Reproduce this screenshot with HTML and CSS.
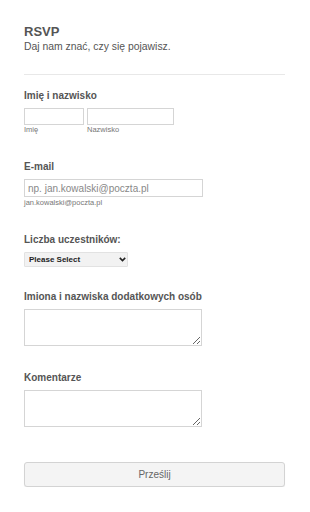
FILE: index.html
```html
<!DOCTYPE html>
<html lang="pl">
<head>
    <meta charset="UTF-8">
    <meta name="viewport" content="width=device-width, initial-scale=1.0">
    <title>RSVP</title>
    <link rel="stylesheet" href="styles.css">
</head>
<body>

    <div id="rsvp">
        <form id="rsvpForm">
            <div class="header">
                <h1>RSVP</h1>
                <p>Daj nam znać, czy się pojawisz.</p>
            </div>

            <div class="field first-field">
                <label>Imię i nazwisko</label>
                <div class="name-row">
                    <div class="name-part">
                        <input type="text" class="first" id="firstName" name="firstName">
                        <span class="sub">Imię</span>
                    </div>
                    <div class="name-part">
                        <input type="text" class="last" id="lastName" name="lastName">
                        <span class="sub">Nazwisko</span>
                    </div>
                </div>
            </div>

            <div class="field">
                <label for="email">E-mail</label>
                <input type="email" class="email" id="email" name="email" placeholder="np. jan.kowalski@poczta.pl">
                <span class="sub helper">jan.kowalski@poczta.pl</span>
            </div>

            <div class="field">
                <label for="count">Liczba uczestników:</label>
                <div class="select-wrap">
                    <select id="count" name="count">
                        <option>Please Select</option>
                        <option>1</option>
                        <option>2</option>
                        <option>3</option>
                        <option>4</option>
                    </select>
                    <svg class="chevron" width="7" height="5" viewBox="0 0 7 5">
                        <path d="M0.8 0.9 L3.5 3.6 L6.2 0.9" fill="none" stroke="#222" stroke-width="1.6"/>
                    </svg>
                </div>
            </div>

            <div class="field after-select">
                <label for="guests">Imiona i nazwiska dodatkowych osób</label>
                <textarea id="guests" name="guests"></textarea>
            </div>

            <div class="field">
                <label for="comments">Komentarze</label>
                <textarea id="comments" name="comments"></textarea>
            </div>

            <button type="submit">Prześlij</button>
        </form>
    </div>

</body>
</html>
```

FILE: styles.css
```css
/* Ogólne */
body {
    margin: 0;
    background-color: #fff;
    font-family: "Liberation Sans", Arial, sans-serif;
    color: #555;
}
#rsvp {
    padding: 24px 25px 0 24px;
}

/* Nagłówek */
.header {
    padding-bottom: 19px;
    border-bottom: 1px solid #e8e8e8;
}
.header h1 {
    margin: 0;
    font-size: 13px;
    font-weight: bold;
    line-height: 15px;
}
.header p {
    margin: 0;
    font-size: 10.4px;
    line-height: 16px;
}

/* Pola */
.field {
    margin-top: 26px;
}
.field.first-field {
    margin-top: 15px;
}
.field.after-select {
    margin-top: 24px;
}
.field label {
    display: block;
    font-size: 10px;
    font-weight: bold;
    line-height: 12px;
    margin-bottom: 6px;
}
.field input,
.field textarea {
    display: block;
    box-sizing: border-box;
    margin: 0;
    border: 1px solid #d5d5d5;
    background: #fff;
    font-family: inherit;
}
.name-row {
    display: flex;
    gap: 3px;
}
.name-part {
    display: flex;
    flex-direction: column;
}
.first {
    width: 60px;
    height: 17px;
}
.last {
    width: 87px;
    height: 17px;
}
.sub {
    display: block;
    font-size: 7.5px;
    line-height: 10px;
    color: #777;
}
.helper {
    line-height: 11px;
}
.email {
    width: 179px;
    height: 18px;
    padding: 0 3px;
    font-size: 10px;
    color: #555;
}
.email::placeholder {
    color: #888;
}

/* Lista wyboru */
.select-wrap {
    position: relative;
    width: 104px;
}
select {
    display: block;
    box-sizing: border-box;
    width: 104px;
    height: 15px;
    margin: 0;
    padding: 0 4px;
    border: 1px solid #e2e2e2;
    border-radius: 1px;
    background: #f2f2f2;
    appearance: none;
    -webkit-appearance: none;
    font-family: inherit;
    font-size: 8px;
    font-weight: bold;
    color: #222;
}
.chevron {
    position: absolute;
    right: 2px;
    top: 5px;
    pointer-events: none;
}
textarea {
    width: 178px;
    height: 37px;
    resize: vertical;
}

/* Przycisk */
#rsvpForm button {
    display: block;
    box-sizing: border-box;
    width: 261px;
    height: 25px;
    margin-top: 35px;
    border: 1px solid #d3d3d3;
    border-radius: 3px;
    background-color: #f4f4f4;
    box-shadow: 0 1px 1px rgba(0, 0, 0, 0.06);
    font-family: inherit;
    font-size: 10px;
    color: #666;
    cursor: pointer;
}
```
